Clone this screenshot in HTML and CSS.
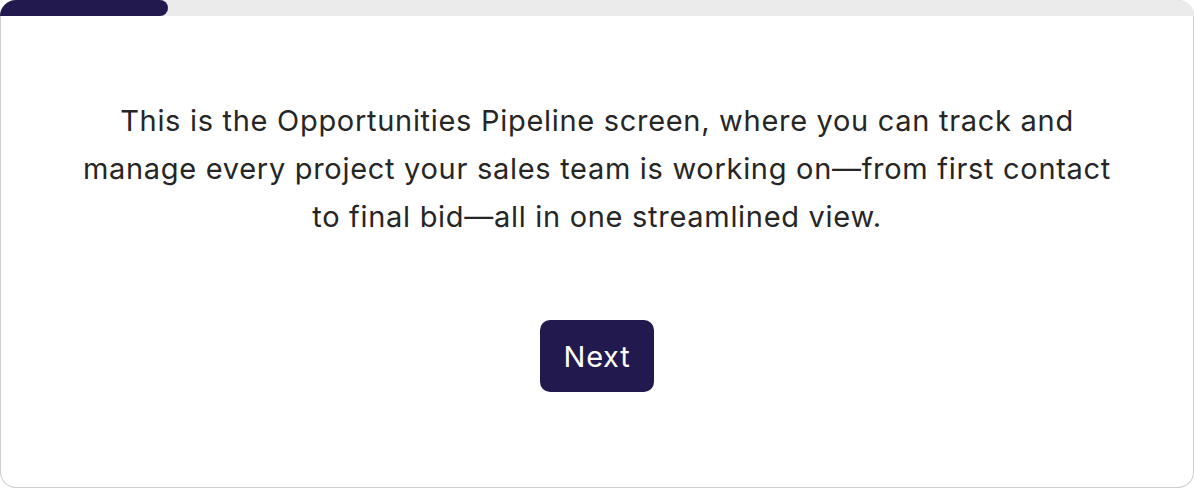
FILE: index.html
```html
<!DOCTYPE html>
<html>
<head>
<meta charset="utf-8">
<link rel="stylesheet" href="styles.css">
</head>
<body>
<div class="card">
  <div class="track"><div class="fill"></div></div>
  <div class="content">
    <p class="message">This is the Opportunities Pipeline screen, where you can track and manage every project your sales team is working on—from first contact to final bid—all in one streamlined view.</p>
    <button class="next">Next</button>
  </div>
</div>
</body>
</html>
```
FILE: styles.css
```css
html, body {
  margin: 0;
  padding: 0;
  background: #ffffff;
}
.card {
  width: 1194px;
  height: 488px;
  box-sizing: border-box;
  border-radius: 16px;
  box-shadow: inset 0 0 0 1px #cfcfcf;
  overflow: hidden;
  display: flex;
  flex-direction: column;
  font-family: Inter, "Noto Sans", sans-serif;
  color: #262626;
}
.track {
  height: 16px;
  background: #ebebeb;
  flex: none;
}
.fill {
  width: 168px;
  height: 16px;
  background: #221a4f;
  border-radius: 0 8px 8px 0;
}
.content {
  display: flex;
  flex-direction: column;
  align-items: center;
  padding-top: 81px;
}
.message {
  margin: 0;
  max-width: 1040px;
  font-size: 29px;
  letter-spacing: 0.7px;
  line-height: 48px;
  text-align: center;
}
.next {
  margin-top: 79px;
  width: 114px;
  height: 72px;
  border: none;
  border-radius: 10px;
  background: #221a4f;
  color: #ffffff;
  font-family: Inter, "Noto Sans", sans-serif;
  font-size: 29px;
  letter-spacing: 0.7px;
  padding: 0;
}
```
